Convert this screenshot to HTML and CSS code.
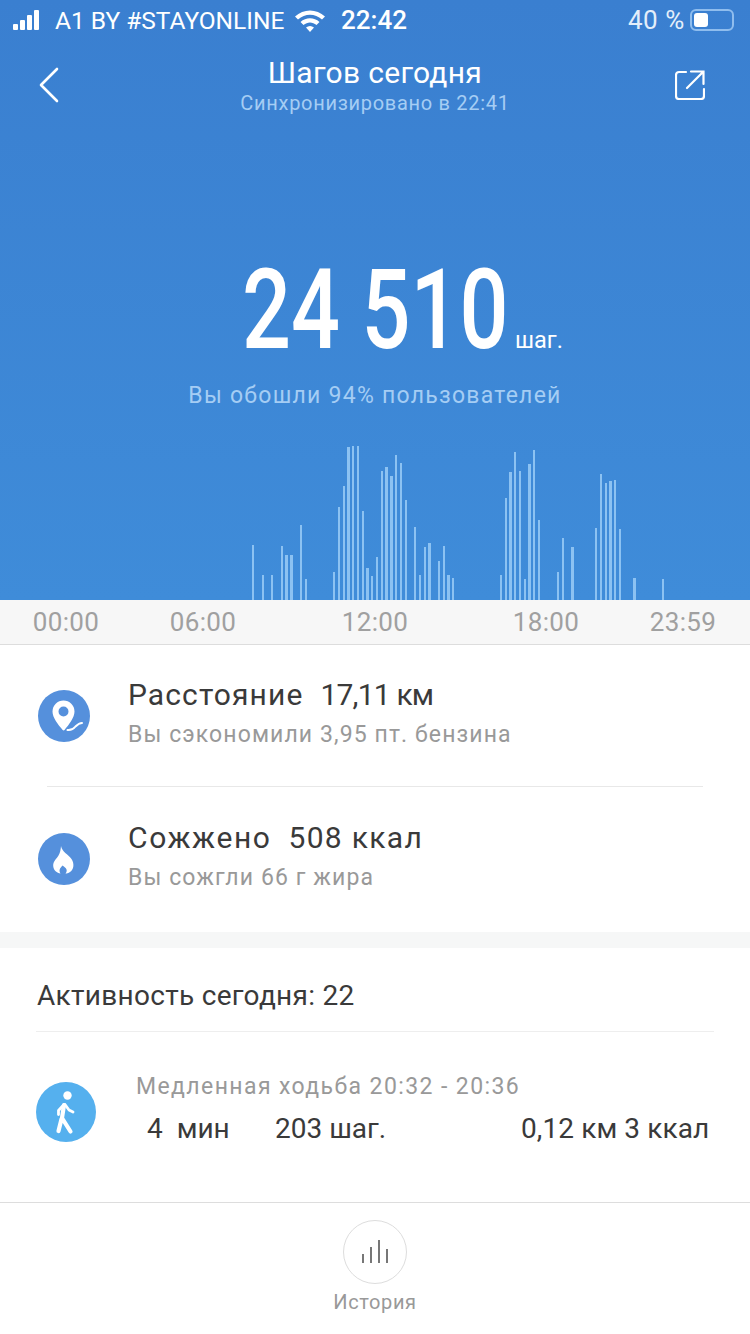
FILE: index.html
```html
<!DOCTYPE html>
<html lang="ru">
<head>
    <meta charset="UTF-8">
    <meta name="viewport" content="width=device-width, initial-scale=1.0">
    <title>Шагов сегодня</title>
    <link rel="stylesheet" href="styles.css">
</head>
<body>
    <div class="hero">
        <div class="status-bar">
            <div class="signal"><i class="s1"></i><i class="s2"></i><i class="s3"></i><i class="s4"></i></div>
            <span class="carrier">A1 BY #STAYONLINE</span>
            <svg class="wifi" width="32" height="24" viewBox="0 0 32 24">
                <path d="M1 8.500C9.500 .5 22.500 .5 31 8.500l-3 3C21 5 11 5 4 11.500z" fill="#fff"/>
                <path d="M6.500 14C12 9 20 9 25.500 14l-3 3C18.500 13.500 13.500 13.500 9.500 17z" fill="#fff"/>
                <path d="M12 19.500c2.500-2 5.500-2 8 0L16 24z" fill="#fff"/>
            </svg>
            <span class="clock">22:42</span>
            <span class="battery-text">40 %</span>
            <div class="battery"><div class="battery-fill"></div></div>
        </div>

        <div class="nav">
            <svg class="back" width="22" height="36" viewBox="0 0 22 36">
                <path d="M19 2L3 18l16 16" fill="none" stroke="#fff" stroke-width="2.600" stroke-linecap="round" stroke-linejoin="round"/>
            </svg>
            <div class="nav-title">
                <div class="title">Шагов сегодня</div>
                <div class="subtitle">Синхронизировано в 22:41</div>
            </div>
            <svg class="share" width="30" height="30" viewBox="0 0 30 30">
                <path d="M11 2H4a3 3 0 0 0-3 3v21a3 3 0 0 0 3 3h22a3 3 0 0 0 3-3v-7" fill="none" stroke="#fff" stroke-width="2.200" stroke-linecap="round"/>
                <path d="M12 18L28 2M16 1.500h12.500V14" fill="none" stroke="#fff" stroke-width="2.200" stroke-linecap="round"/>
            </svg>
        </div>

        <div class="steps"><span class="steps-num">24 510</span><span class="steps-unit">шаг.</span></div>
        <div class="steps-note">Вы обошли 94% пользователей</div>

        <svg class="chart" width="750" height="160" viewBox="0 440 750 160">
            <g fill="#8cc2f2">
                <rect x="252" y="545" width="2" height="55"/><rect x="262" y="575" width="2" height="25"/>
                <rect x="271" y="575" width="2" height="25"/><rect x="281" y="546" width="2" height="54"/>
                <rect x="285" y="555" width="3" height="45"/><rect x="290" y="555" width="3" height="45"/>
                <rect x="300" y="525" width="2" height="75"/><rect x="305" y="579" width="2" height="21"/>
                <rect x="333" y="572" width="2" height="28"/><rect x="338" y="507" width="2" height="93"/>
                <rect x="343" y="486" width="2" height="114"/><rect x="347" y="447" width="3" height="153"/>
                <rect x="352" y="446" width="2" height="154"/><rect x="357" y="446" width="2" height="154"/>
                <rect x="362" y="511" width="2" height="89"/><rect x="366" y="568" width="3" height="32"/>
                <rect x="371" y="576" width="2" height="24"/><rect x="376" y="557" width="2" height="43"/>
                <rect x="381" y="471" width="2" height="129"/><rect x="385" y="467" width="3" height="133"/>
                <rect x="390" y="476" width="3" height="124"/><rect x="395" y="455" width="2" height="145"/>
                <rect x="400" y="463" width="2" height="137"/><rect x="405" y="500" width="2" height="100"/>
                <rect x="414" y="527" width="2" height="73"/><rect x="419" y="575" width="2" height="25"/>
                <rect x="424" y="547" width="2" height="53"/><rect x="428" y="543" width="3" height="57"/>
                <rect x="438" y="561" width="2" height="39"/><rect x="443" y="546" width="2" height="54"/>
                <rect x="447" y="575" width="3" height="25"/><rect x="452" y="578" width="2" height="22"/>
                <rect x="500" y="575" width="2" height="25"/><rect x="505" y="498" width="2" height="102"/>
                <rect x="509" y="472" width="3" height="128"/><rect x="514" y="452" width="2" height="148"/>
                <rect x="519" y="471" width="2" height="129"/><rect x="524" y="579" width="2" height="21"/>
                <rect x="528" y="464" width="3" height="136"/><rect x="533" y="450" width="2" height="150"/>
                <rect x="538" y="520" width="2" height="80"/><rect x="557" y="572" width="2" height="28"/>
                <rect x="562" y="538" width="2" height="62"/><rect x="571" y="547" width="3" height="53"/>
                <rect x="595" y="528" width="2" height="72"/><rect x="600" y="474" width="2" height="126"/>
                <rect x="605" y="483" width="2" height="117"/><rect x="609" y="481" width="3" height="119"/>
                <rect x="614" y="480" width="2" height="120"/><rect x="619" y="529" width="2" height="71"/>
                <rect x="633" y="578" width="3" height="22"/><rect x="662" y="579" width="2" height="21"/>
            </g>
        </svg>
    </div>

    <div class="axis">
        <span>00:00</span><span>06:00</span><span>12:00</span><span>18:00</span><span>23:59</span>
    </div>

    <div class="stats">
        <div class="stat-row">
            <svg class="stat-icon" width="52" height="52" viewBox="0 0 52 52">
                <circle cx="26" cy="26" r="26" fill="#5590dc"/>
                <path fill-rule="evenodd" d="M25.500 10.500a11 11 0 0 1 11 11c0 6-5.500 13-10 18.500-.5.600-1.300.6-1.800 0-4.700-5.500-10.200-12.500-10.200-18.500a11 11 0 0 1 11-11zm0 6a5 5 0 1 0 0 10 5 5 0 0 0 0-10z" fill="#fff"/>
                <path d="M29.500 40c4 .5 6-1 8-3.500 2-2 3.500-3.500 6.500-3.500" fill="none" stroke="#fff" stroke-width="2" stroke-linecap="round"/>
            </svg>
            <div class="stat-text">
                <div class="stat-main"><span class="stat-label">Расстояние</span><span class="stat-val dist">17,11 км</span></div>
                <div class="stat-sub">Вы сэкономили 3,95 пт. бензина</div>
            </div>
        </div>
        <div class="stat-line"></div>
        <div class="stat-row">
            <svg class="stat-icon" width="52" height="52" viewBox="0 0 52 52">
                <circle cx="26" cy="26" r="26" fill="#5590dc"/>
                <path d="M23 13c1 6 7 8 10.500 13 3 4.500 2.500 10.500-1.500 13-1.500 1-3.500 1.500-4.500 1.500 2.500-3 1-5.500-3-8-2.500 2.500-4 5-2 8-3.500-.5-7-3-7.300-7.500-.2-5 3.300-7 5.300-10.500 1.500-2.500 2.300-6 2.500-9.500z" fill="#fff"/>
            </svg>
            <div class="stat-text">
                <div class="stat-main"><span class="stat-label burn-label">Сожжено</span><span class="stat-val burn">508 ккал</span></div>
                <div class="stat-sub">Вы сожгли 66 г жира</div>
            </div>
        </div>
    </div>

    <div class="activity">
        <div class="activity-head">Активность сегодня: 22</div>
        <div class="activity-row">
            <svg class="walk-icon" width="60" height="60" viewBox="0 0 60 60">
                <circle cx="30" cy="30" r="30" fill="#55b0ee"/>
                <circle cx="31.500" cy="13.500" r="4.200" fill="#fff"/>
                <path d="M28 23l-2 13 8.500 13.500M25.500 37L22.500 49" fill="none" stroke="#fff" stroke-width="4.200" stroke-linecap="round" stroke-linejoin="round"/>
                <path d="M28 22.500l-5.500 6v4M29 22.500l4 5.500 4 2" fill="none" stroke="#fff" stroke-width="2.800" stroke-linecap="round" stroke-linejoin="round"/>
            </svg>
            <div class="activity-text">
                <div class="activity-name">Медленная ходьба 20:32 - 20:36</div>
                <div class="activity-values">
                    <span class="val-time">4&nbsp; мин</span>
                    <span class="val-steps">203 шаг.</span>
                    <span class="val-rest">0,12 км 3 ккал</span>
                </div>
            </div>
        </div>
    </div>

    <div class="tabbar">
        <div class="tab-circle">
            <svg width="28" height="26" viewBox="0 0 28 26">
                <path d="M2 15v9M10 8v16M18 1v23M26 10v14" fill="none" stroke="#777" stroke-width="2"/>
            </svg>
        </div>
        <div class="tab-label">История</div>
    </div>
</body>
</html>
```

FILE: styles.css
```css
* {
    box-sizing: border-box;
}
body {
    margin: 0;
    width: 750px;
    height: 1334px;
    overflow: hidden;
    background: #fff;
    font-family: Roboto, "Noto Sans", sans-serif;
    color: #3a3a3a;
}
.hero {
    height: 600px;
    background: linear-gradient(#3a7fd0, #3f8cd9);
    color: #fff;
    display: flex;
    flex-direction: column;
}
.status-bar {
    height: 40px;
    display: flex;
    align-items: center;
    padding-left: 13px;
    font-size: 24.500px;
}
.signal {
    display: flex;
    align-items: flex-end;
    gap: 2px;
    width: 34px;
    height: 20px;
}
.signal i {
    display: block;
    width: 5px;
    background: #fff;
    border-radius: 1px;
}
.s1 { height: 6px; }
.s2 { height: 10px; }
.s3 { height: 15px; }
.s4 { height: 20px; }
.carrier {
    margin-left: 8px;
    width: 231px;
    white-space: nowrap;
}
.wifi {
    margin-left: 8px;
}
.clock {
    margin-left: 15px;
    width: 287px;
    font-size: 26px;
    font-weight: 500;
}
.battery-text {
    width: 62px;
    font-size: 26px;
    letter-spacing: .5px;
    color: #e3eefa;
}
.battery {
    width: 44px;
    height: 22px;
    border: 2px solid #8fbdee;
    border-radius: 6px;
    padding: 2px;
}
.battery-fill {
    width: 14px;
    height: 14px;
    background: #fff;
    border-radius: 3px;
}
.nav {
    height: 90px;
    display: grid;
    grid-template-columns: 1fr auto 1fr;
    align-items: center;
    padding: 0 38px;
}
.share {
    justify-self: end;
    margin-right: 7px;
}
.nav-title {
    text-align: center;
}
.title {
    font-size: 30px;
    line-height: 36px;
    letter-spacing: .3px;
}
.subtitle {
    font-size: 20px;
    line-height: 24px;
    letter-spacing: .7px;
    color: #a5cdf4;
}
.steps {
    display: flex;
    align-items: baseline;
    margin-top: 130px;
    height: 100px;
    padding-left: 242px;
}
.steps-num {
    width: 265px;
    font-size: 112px;
    font-weight: 500;
    line-height: 100px;
    white-space: nowrap;
    transform: scaleX(.77);
    transform-origin: left;
}
.steps-unit {
    font-size: 23.500px;
    margin-left: 8px;
}
.steps-note {
    margin-top: 22px;
    text-align: center;
    font-size: 23px;
    letter-spacing: 1.250px;
    color: #a5cdf4;
}
.chart {
    display: block;
    margin-top: auto;
}
.axis {
    height: 45px;
    display: grid;
    grid-template-columns: 132px 142px 202px 140px 134px;
    align-items: center;
    background: #f7f7f7;
    border-bottom: 1px solid #ddd;
    font-size: 26px;
    letter-spacing: .4px;
    color: #a0a0a0;
    text-align: center;
}
.stats {
    height: 287px;
}
.stat-row {
    height: 142px;
    display: flex;
    align-items: center;
    padding-left: 38px;
}
.stat-icon {
    flex: none;
    margin-right: 38px;
}
.stat-text {
    padding-bottom: 6px;
}
.stat-main {
    font-size: 30px;
    line-height: 38px;
    margin-bottom: 6px;
}
.stat-label {
    letter-spacing: 1.100px;
    margin-right: 17px;
}
.burn-label {
    letter-spacing: 1.600px;
}
.dist {
    letter-spacing: -.8px;
}
.burn {
    letter-spacing: 1.300px;
}
.stat-sub {
    font-size: 23px;
    line-height: 30px;
    letter-spacing: 1.100px;
    color: #999;
}
.stat-line {
    height: 1px;
    margin: -1px 47px 1px;
    background: #e8e8e8;
}
.activity {
    height: 270px;
    border-top: 16px solid #f6f7f7;
    padding: 0 36px;
}
.activity-head {
    height: 84px;
    line-height: 96px;
    padding-left: 1px;
    font-size: 28px;
    letter-spacing: .3px;
    border-bottom: 1px solid #eee;
}
.activity-row {
    display: flex;
    align-items: center;
    margin-top: 41px;
}
.walk-icon {
    flex: none;
    margin-right: 40px;
}
.activity-text {
    flex: 1;
    padding-bottom: 2px;
}
.activity-name {
    font-size: 23px;
    line-height: 28px;
    letter-spacing: 1.400px;
    margin-bottom: 8px;
    color: #999;
}
.activity-values {
    display: flex;
    font-size: 28px;
    line-height: 40px;
    padding-left: 11px;
}
.val-time {
    width: 128px;
}
.val-steps {
    width: 246px;
}
.val-rest {
    letter-spacing: .1px;
}
.tabbar {
    height: 132px;
    border-top: 1px solid #ddd;
    display: flex;
    flex-direction: column;
    align-items: center;
    padding-top: 17px;
}
.tab-circle {
    width: 64px;
    height: 64px;
    border: 1px solid #ddd;
    border-radius: 50%;
    display: flex;
    align-items: center;
    justify-content: center;
}
.tab-label {
    margin-top: 6px;
    font-size: 20px;
    letter-spacing: .6px;
    color: #999;
}
```
